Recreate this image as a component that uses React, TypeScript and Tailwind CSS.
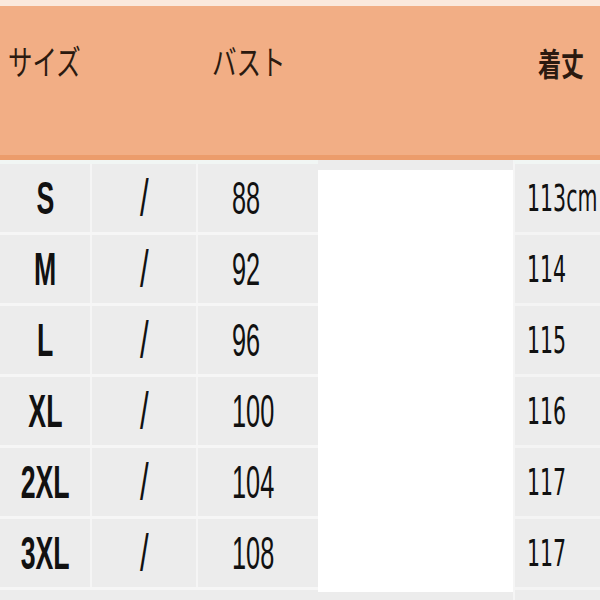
const rows = [
  { size: 'S', bust: '88', length: '113cm' },
  { size: 'M', bust: '92', length: '114' },
  { size: 'L', bust: '96', length: '115' },
  { size: 'XL', bust: '100', length: '116' },
  { size: '2XL', bust: '104', length: '117' },
  { size: '3XL', bust: '108', length: '117' },
]

const jp = { fontFamily: '"Noto Sans CJK JP", sans-serif' }

export default function App() {
  return (
    <div className="w-[600px] h-[600px] bg-white overflow-hidden flex flex-col" style={{ fontFamily: '"Liberation Sans", "Noto Sans CJK JP", sans-serif' }}>
      <div className="h-[6px] bg-[#fbe9dd]" />
      {/* header band */}
      <div className="h-[154px] bg-[#f2ae85] border-b-[5px] border-[#ec9c6b] flex text-[#2b1a10] whitespace-nowrap">
        <div className="w-[198px] shrink-0 pl-[8px] pt-[38px]">
          <span className="inline-block origin-left scale-x-[0.72] text-[34px] leading-none" style={jp}>サイズ</span>
        </div>
        <div className="w-[315px] shrink-0 pl-[14px] pt-[38px]">
          <span className="inline-block origin-left scale-x-[0.72] text-[34px] leading-none" style={jp}>バスト</span>
        </div>
        <div className="w-[87px] shrink-0 pl-[25px] pt-[40px]">
          <span className="inline-block origin-left scale-x-[0.72] text-[32px] leading-none font-bold" style={jp}>着丈</span>
        </div>
      </div>
      {/* body */}
      <div className="flex-1 flex bg-[#ececec] whitespace-nowrap">
        <div className="w-[318px] shrink-0 flex flex-col border-t-[4px] border-[#f1f6f4]">
          {rows.map((r) => (
            <div key={r.size} className="h-[71px] flex border-b-[3px] border-[#f6f6f6] text-[#111]">
              <div className="w-[92px] border-r-[2px] border-[#f5f5f5] flex items-center justify-center">
                <span className="inline-block scale-x-[0.58] text-[46px] font-semibold">{r.size}</span>
              </div>
              <div className="w-[106px] border-r-[2px] border-[#f5f5f5] flex items-center justify-center">
                <span className="inline-block scale-x-[0.6] text-[52px]">/</span>
              </div>
              <div className="flex-1 flex items-center pl-[34px]">
                <span className="inline-block origin-left scale-x-[0.55] text-[46px] font-medium">{r.bust}</span>
              </div>
            </div>
          ))}
        </div>
        <div className="w-[195px] shrink-0 bg-white mt-[10px] mb-[8px]" />
        <div className="w-[87px] shrink-0 min-w-0 flex flex-col border-l-[2px] border-[#f5f5f5] border-t-[4px] border-t-[#f1f6f4]">
          {rows.map((r, i) => (
            <div key={i} className="h-[71px] flex items-center pl-[12px] border-b-[3px] border-[#f4f4f4] text-[#111]">
              <span className="inline-block origin-left scale-x-[0.54] text-[38px] font-medium" style={{ fontFamily: '"DejaVu Sans", sans-serif' }}>{r.length}</span>
            </div>
          ))}
        </div>
      </div>
    </div>
  )
}
